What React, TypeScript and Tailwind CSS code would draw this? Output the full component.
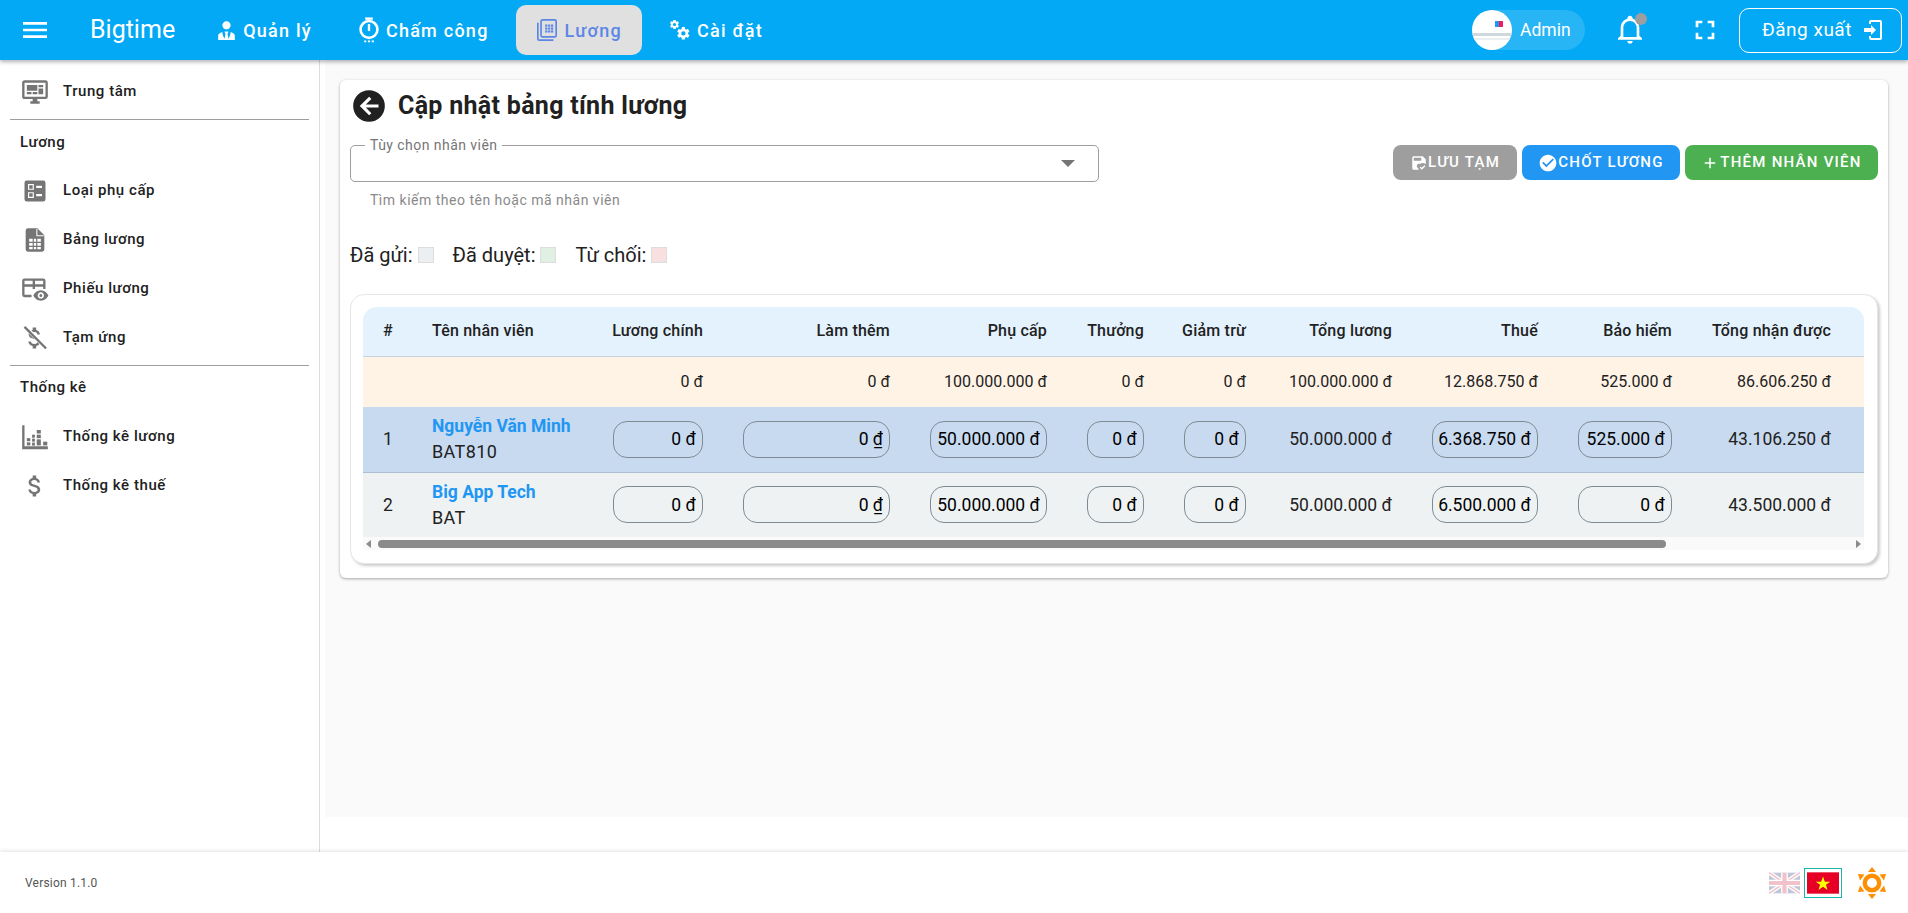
import type { ReactNode } from "react"

const ROBOTO = "font-['Roboto',sans-serif]"

const paths = {
  menu: "M3,6H21V8H3V6M3,11H21V13H3V11M3,16H21V18H3V16Z",
  tie: "M12 3C14.21 3 16 4.79 16 7S14.21 11 12 11 8 9.21 8 7 9.79 3 12 3M16 13.54C16 14.6 15.72 17.07 13.81 19.83L13 15L13.94 13.12C13.32 13.05 12.67 13 12 13S10.68 13.05 10.06 13.12L11 15L10.19 19.83C8.28 17.07 8 14.6 8 13.54C5.61 14.24 4 15.5 4 17V21H20V17C20 15.5 18.4 14.24 16 13.54Z",
  login: "M10,17V14H3V10H10V7L15,12L10,17M10,2H19A2,2 0 0,1 21,4V20A2,2 0 0,1 19,22H10A2,2 0 0,1 8,20V18H10V20H19V4H10V6H8V4A2,2 0 0,1 10,2Z",
  bell: "M10 21H14C14 22.1 13.1 23 12 23S10 22.1 10 21M21 19V20H3V19L5 17V11C5 7.9 7 5.2 10 4.3V4C10 2.9 10.9 2 12 2S14 2.9 14 4V4.3C17 5.2 19 7.9 19 11V17L21 19M17 11C17 8.2 14.8 6 12 6S7 8.2 7 11V18H17V11Z",
  fullscreen: "M5,5H10V7H7V10H5V5M14,5H19V10H17V7H14V5M17,14H19V19H14V17H17V14M10,17V19H5V14H7V17H10Z",
  back: "M2,12A10,10 0 0,1 12,2A10,10 0 0,1 22,12A10,10 0 0,1 12,22A10,10 0 0,1 2,12M18,11H10L13.5,7.5L12.08,6.08L6.16,12L12.08,17.92L13.5,16.5L10,13H18V11Z",
  check: "M12 2C6.5 2 2 6.5 2 12S6.5 22 12 22 22 17.5 22 12 17.5 2 12 2M10 17L5 12L6.41 10.59L10 14.17L17.59 6.58L19 8L10 17Z",
  plus: "M19,13H13V19H11V13H5V11H11V5H13V11H19V13Z",
  save: "M17 3H5C3.89 3 3 3.9 3 5V19C3 20.1 3.89 21 5 21H11.81C11.42 20.34 11.17 19.6 11.07 18.84C9.5 18.31 8.66 16.6 9.2 15.03C9.61 13.83 10.73 13 12 13C12.44 13 12.88 13.1 13.28 13.29C15.57 11.5 18.83 11.59 21 13.54V7L17 3M15 9H5V5H15V9M15.75 21L13 18L14.16 16.84L15.75 18.43L19.34 14.84L20.5 16.25L15.75 21",
  monitor: "M21,16V4H3V16H21M21,2A2,2 0 0,1 23,4V16A2,2 0 0,1 21,18H14V20H16V22H8V20H10V18H3C1.89,18 1,17.1 1,16V4C1,2.89 1.9,2 3,2H21M5,6H14V11H5V6M15,6H19V8H15V6M19,9V14H15V9H19M5,12H9V14H5V12M10,12H14V14H10V12Z",
  ballot: "M13,9.5H18V7.5H13V9.5M13,16.5H18V14.5H13V16.5M19,21H5A2,2 0 0,1 3,19V5A2,2 0 0,1 5,3H19A2,2 0 0,1 21,5V19A2,2 0 0,1 19,21M6,11H11V6H6V11M7,7H10V10H7V7M6,18H11V13H6V18M7,14H10V17H7V14Z",
  fileTable: "M6 2A2 2 0 0 0 4 4V20A2 2 0 0 0 6 22H18A2 2 0 0 0 20 20V8L14 2H6M7 11H10V13.5H7V11M11 11H13V13.5H11V11M14 11H17V13.5H14V11M7 14.5H10V17H7V14.5M11 14.5H13V17H11V14.5M14 14.5H17V17H14V14.5M7 18H10V20H7V18M11 18H13V20H11V18M14 18H17V20H14V18Z",
  dollar: "M11.8 10.9c-2.27-.59-3-1.2-3-2.15 0-1.09 1.01-1.85 2.7-1.85 1.78 0 2.44.85 2.5 2.1h2.21c-.07-1.72-1.12-3.3-3.21-3.81V3h-3v2.16c-1.94.42-3.5 1.68-3.5 3.61 0 2.31 1.91 3.46 4.7 4.13 2.5.6 3 1.48 3 2.41 0 .69-.49 1.79-2.7 1.79-2.06 0-2.87-.92-2.98-2.1h-2.2c.12 2.19 1.76 3.42 3.68 3.83V21h3v-2.15c1.95-.37 3.5-1.5 3.5-3.55 0-2.84-2.43-3.81-4.7-4.4z",
  cog: "M12,15.5A3.5,3.5 0 0,1 8.5,12A3.5,3.5 0 0,1 12,8.5A3.5,3.5 0 0,1 15.5,12A3.5,3.5 0 0,1 12,15.5M19.43,12.97C19.47,12.65 19.5,12.33 19.5,12C19.5,11.67 19.47,11.34 19.43,11L21.54,9.37C21.73,9.22 21.78,8.95 21.66,8.73L19.66,5.27C19.54,5.05 19.27,4.96 19.05,5.05L16.56,6.05C16.04,5.66 15.5,5.32 14.87,5.07L14.5,2.42C14.46,2.18 14.25,2 14,2H10C9.75,2 9.54,2.18 9.5,2.42L9.13,5.07C8.5,5.32 7.96,5.66 7.44,6.05L4.95,5.05C4.73,4.96 4.46,5.05 4.34,5.27L2.34,8.73C2.21,8.95 2.27,9.22 2.46,9.37L4.57,11C4.53,11.34 4.5,11.67 4.5,12C4.5,12.33 4.53,12.65 4.57,12.97L2.46,14.63C2.27,14.78 2.21,15.05 2.34,15.27L4.34,18.73C4.46,18.95 4.73,19.03 4.95,18.95L7.44,17.94C7.96,18.34 8.5,18.68 9.13,18.93L9.5,21.58C9.54,21.82 9.75,22 10,22H14C14.25,22 14.46,21.82 14.5,21.58L14.87,18.93C15.5,18.67 16.04,18.34 16.56,17.94L19.05,18.95C19.27,19.03 19.54,18.95 19.66,18.73L21.66,15.27C21.78,15.05 21.73,14.78 21.54,14.63L19.43,12.97Z",
}

function Icon({ d, className }: { d: string; className?: string }) {
  return (
    <svg viewBox="0 0 24 24" fill="currentColor" fillRule="evenodd" className={className}>
      <path d={d} />
    </svg>
  )
}

function TimerIcon({ className }: { className?: string }) {
  return (
    <svg viewBox="0 0 24 24" fill="none" stroke="currentColor" className={className}>
      <path d="M8.5 1.5H15.5" strokeWidth="2.2" />
      <circle cx="12" cy="11.5" r="7.8" strokeWidth="2.4" />
      <path d="M12 6.5V13" strokeWidth="2.2" />
      <path d="M7.5 22.5H9.5M11 22.5H13M14.5 22.5H16.5" strokeWidth="1.8" />
    </svg>
  )
}

function PayrollIcon({ className }: { className?: string }) {
  return (
    <svg viewBox="0 0 24 24" fill="none" stroke="currentColor" className={className}>
      <path d="M2 4V21.5A1.5 1.5 0 0 0 3.5 23H19" strokeWidth="1.8" />
      <rect x="5.5" y="1" width="16.5" height="18.5" rx="1.5" strokeWidth="1.8" />
      <g fill="currentColor" stroke="none">
        <rect x="10" y="6" width="2.4" height="2.4" />
        <rect x="13.2" y="6" width="2.4" height="2.4" />
        <rect x="16.4" y="6" width="2.4" height="2.4" />
        <rect x="10" y="9.2" width="2.4" height="2.4" />
        <rect x="13.2" y="9.2" width="2.4" height="2.4" />
        <rect x="16.4" y="9.2" width="2.4" height="2.4" />
        <rect x="10" y="12.4" width="2.4" height="2.4" />
        <rect x="13.2" y="12.4" width="2.4" height="2.4" />
        <rect x="16.4" y="12.4" width="2.4" height="2.4" />
      </g>
    </svg>
  )
}

function CogsIcon({ className }: { className?: string }) {
  return (
    <svg viewBox="0 0 24 24" fill="currentColor" fillRule="evenodd" className={className}>
      <path d={paths.cog} transform="translate(0 0) scale(0.5)" />
      <path d={paths.cog} transform="translate(7.5 7.5) scale(0.68)" />
    </svg>
  )
}

function FileTableIcon({ className }: { className?: string }) {
  return (
    <svg viewBox="0 0 24 24" className={className}>
      <path fill="currentColor" fillRule="evenodd" d={paths.fileTable} />
      <path d="M13.6 2.5V8.4H19.5" fill="none" stroke="#ffffff" strokeWidth="0.9" />
    </svg>
  )
}

function TableEyeIcon({ className }: { className?: string }) {
  return (
    <svg viewBox="0 0 24 24" className={className}>
      <path
        fill="currentColor"
        fillRule="evenodd"
        d="M3 3H19A2 2 0 0 1 21 5V12H19V10H12V12H10V10H3V17H9V19H3A2 2 0 0 1 1 17V5A2 2 0 0 1 3 3M3 5V8H10V5H3M12 5V8H19V5H12Z"
      />
      <path
        fill="currentColor"
        fillRule="evenodd"
        d="M17 13C20 13 22.3 15 23.5 17.5C22.3 20 20 22 17 22C14 22 11.7 20 10.5 17.5C11.7 15 14 13 17 13M17 14.8C15.5 14.8 14.3 16 14.3 17.5C14.3 19 15.5 20.2 17 20.2C18.5 20.2 19.7 19 19.7 17.5C19.7 16 18.5 14.8 17 14.8M17 16.2A1.3 1.3 0 1 1 17 18.8A1.3 1.3 0 1 1 17 16.2Z"
      />
    </svg>
  )
}

function DollarOffIcon({ className }: { className?: string }) {
  return (
    <svg viewBox="0 0 24 24" className={className}>
      <path fill="currentColor" d={paths.dollar} />
      <path d="M2.5 1.5L22.5 21.5" stroke="#ffffff" strokeWidth="3.5" />
      <path d="M3 2.5L21.5 21" stroke="currentColor" strokeWidth="2" />
    </svg>
  )
}

function ChartIcon({ className }: { className?: string }) {
  return (
    <svg viewBox="0 0 24 24" fill="currentColor" className={className}>
      <path d="M1 2H3V20H23V22.5H1Z" />
      <rect x="5" y="13" width="3" height="2.6" />
      <rect x="5" y="16.6" width="3" height="2.6" />
      <rect x="9.5" y="10" width="2.4" height="2.6" />
      <rect x="9.5" y="13.4" width="2.4" height="2.6" />
      <rect x="9.5" y="16.8" width="2.4" height="2.6" />
      <rect x="13.5" y="6" width="3.5" height="3" />
      <rect x="13.5" y="10" width="3.5" height="3" />
      <rect x="13.5" y="14" width="3.5" height="5.2" />
      <rect x="19" y="16" width="3.5" height="3.2" />
    </svg>
  )
}

function NavItem({ icon, label, active }: { icon: ReactNode; label: string; active?: boolean }) {
  return (
    <div
      className={`flex h-[50px] items-center rounded-[10px] px-[20px] text-[18px] font-medium tracking-[1.25px] ${
        active ? "bg-[#e0e0e0] text-[#5b86e5]" : "text-white"
      }`}
    >
      {icon}
      {label}
    </div>
  )
}

function Header() {
  return (
    <header className="relative z-20 flex h-[60px] shrink-0 items-center bg-[#03a9f4] text-white shadow-[0_2px_4px_rgba(0,0,0,0.3)]">
      <Icon d={paths.menu} className="ml-[19px] h-[32px] w-[32px]" />
      <span className="ml-[39px] text-[25px] whitespace-nowrap">Bigtime</span>
      <nav className="ml-[22px] flex items-center gap-[7px]">
        <NavItem icon={<Icon d={paths.tie} className="mr-[4px] -ml-[3px] h-[25px] w-[25px]" />} label="Quản lý" />
        <NavItem icon={<TimerIcon className="mr-[4px] -ml-[3px] h-[28px] w-[26px]" />} label="Chấm công" />
        <NavItem active icon={<PayrollIcon className="mr-[7px] h-[24px] w-[22px]" />} label="Lương" />
        <NavItem icon={<CogsIcon className="mr-[6px] h-[24px] w-[22px]" />} label="Cài đặt" />
      </nav>
      <div className="ml-auto flex items-center pr-[6px]">
        <div className="flex h-[40px] w-[113px] items-center rounded-full bg-white/15">
          <div className="flex h-[40px] w-[40px] flex-col items-center justify-center overflow-hidden rounded-full bg-white">
            <div className="ml-[14px] flex h-[6px] w-[8px]">
              <span className="w-1/2 bg-[#2196f3]" />
              <span className="w-1/2 bg-[#e91e63]" />
            </div>
            <div className="mt-[6px] h-[3px] w-full bg-[#cfd8dc]" />
            <div className="mt-[2px] h-[2px] w-full bg-[#eceff1]" />
          </div>
          <span className="ml-[8px] text-[17.5px]">Admin</span>
        </div>
        <div className="relative ml-[29px] -mt-[2px] h-[32px] w-[32px]">
          <Icon d={paths.bell} className="h-[32px] w-[32px]" />
          <span className="absolute top-0 left-[21px] h-[12px] w-[12px] rounded-full bg-[#9e9e9e]" />
        </div>
        <Icon d={paths.fullscreen} className="ml-[43px] h-[32px] w-[32px]" />
        <button className="ml-[18px] flex h-[45px] w-[163px] items-center rounded-[10px] border border-white pl-[22px] text-[19px] tracking-[0.5px]">
          Đăng xuất
          <Icon d={paths.login} className="ml-[9px] h-[24px] w-[24px]" />
        </button>
      </div>
    </header>
  )
}

function SideItem({ icon, label }: { icon: ReactNode; label: string }) {
  return (
    <div className="flex h-[49px] items-center pl-[21px] text-[15px] font-medium tracking-[0.55px] text-[#212121]">
      <span className="flex w-[28px] justify-center text-[#757575]">{icon}</span>
      <span className="ml-[14px]">{label}</span>
    </div>
  )
}

function SideLabel({ label }: { label: string }) {
  return <div className="flex h-[44px] items-center pl-[20px] text-[15px] font-medium tracking-[0.55px] text-[#212121]">{label}</div>
}

function Sidebar() {
  return (
    <aside className="w-[320px] shrink-0 border-r border-[#dcdcdc] bg-white pt-[7px]">
      <SideItem icon={<Icon d={paths.monitor} className="h-[28px] w-[28px]" />} label="Trung tâm" />
      <div className="mx-[10px] mt-[3px] border-t border-[#9e9e9e]" />
      <SideLabel label="Lương" />
      <div className="h-[2px]" />
      <SideItem icon={<Icon d={paths.ballot} className="h-[28px] w-[28px]" />} label="Loại phụ cấp" />
      <SideItem icon={<FileTableIcon className="h-[30px] w-[30px]" />} label="Bảng lương" />
      <SideItem icon={<TableEyeIcon className="h-[28px] w-[28px]" />} label="Phiếu lương" />
      <SideItem icon={<DollarOffIcon className="h-[28px] w-[28px]" />} label="Tạm ứng" />
      <div className="mx-[10px] mt-[3px] border-t border-[#9e9e9e]" />
      <div className="-mt-[1px]">
        <SideLabel label="Thống kê" />
      </div>
      <div className="h-[3px]" />
      <SideItem icon={<ChartIcon className="h-[28px] w-[28px]" />} label="Thống kê lương" />
      <SideItem icon={<Icon d={paths.dollar} className="h-[28px] w-[28px]" />} label="Thống kê thuế" />
    </aside>
  )
}

function ActionButton({ bg, icon, label }: { bg: string; icon: ReactNode; label: string }) {
  return (
    <button className={`flex h-[35px] items-center justify-center rounded-[8px] text-[15px] font-medium tracking-[1.25px] text-white ${bg}`}>
      {icon}
      {label}
    </button>
  )
}

function Legend({ label, box }: { label: string; box: string }) {
  return (
    <div className="flex items-center">
      <span>{label}</span>
      <span className={`ml-[5px] h-[16px] w-[16px] border border-[#dddddd] ${box}`} />
    </div>
  )
}

const colWidths = ["w-[50px]", "w-[180px]", "w-[130px]", "w-[187px]", "w-[157px]", "w-[97px]", "w-[102px]", "w-[146px]", "w-[146px]", "w-[134px]", "w-[172px]"]

const headers = ["Lương chính", "Làm thêm", "Phụ cấp", "Thưởng", "Giảm trừ", "Tổng lương", "Thuế", "Bảo hiểm", "Tổng nhận được"]

const totals = ["0 đ", "0 đ", "100.000.000 đ", "0 đ", "0 đ", "100.000.000 đ", "12.868.750 đ", "525.000 đ", "86.606.250 đ"]

function MoneyInput({ value }: { value: string }) {
  return (
    <input
      readOnly
      value={value}
      className="block h-[37px] w-full rounded-[14px] border border-[#7f8b94] bg-transparent pr-[6px] pl-[4px] text-right text-[17.5px] text-black outline-none"
    />
  )
}

function EmployeeRow({ no, name, code, bg, values }: { no: number; name: string; code: string; bg: string; values: string[] }) {
  return (
    <tr className={`h-[65px] ${bg}`}>
      <td className="pl-[20px] text-[17.5px] text-[#212121]">{no}</td>
      <td className="pr-[20px] pl-[19px]">
        <div className="text-[17.5px] leading-[26px] font-bold whitespace-nowrap text-[#2196f3]">{name}</div>
        <div className="text-[18px] leading-[26px] tracking-[0.4px] text-[#212121]">{code}</div>
      </td>
      {values.map((v, i) =>
        i === 5 || i === 8 ? (
          <td key={i} className={`text-right text-[17.5px] text-[#212121] ${i === 8 ? "pr-[33px]" : "pr-[20px]"}`}>
            {v}
          </td>
        ) : (
          <td key={i} className="px-[20px]">
            <MoneyInput value={v} />
          </td>
        ),
      )}
    </tr>
  )
}

function PayrollTable() {
  return (
    <div className="mt-[27px] rounded-[14px] border border-[#e6e6e6] bg-white pt-[12px] pr-[13px] pb-[13px] pl-[12px] shadow-[2px_2px_3px_rgba(0,0,0,0.2)]">
      <table className="w-[1501px] table-fixed border-collapse overflow-hidden rounded-t-[14px] text-[16px] text-[#212121]">
        <colgroup>
          {colWidths.map((w) => (
            <col key={w} className={w} />
          ))}
        </colgroup>
        <thead>
          <tr className="h-[49px] border-b border-[#c8d2de] bg-[#e3f2fd] font-medium">
            <th className="pl-[20px] text-left font-medium">#</th>
            <th className="pr-[20px] pl-[19px] text-left font-medium tracking-[0.2px]">Tên nhân viên</th>
            {headers.map((h, i) => (
              <th key={h} className={`text-right font-medium tracking-[0.2px] whitespace-nowrap ${i === 8 ? "pr-[33px]" : "pr-[20px]"}`}>
                {h}
              </th>
            ))}
          </tr>
        </thead>
        <tbody>
          <tr className="h-[51px] bg-[#fff3e5]">
            <td />
            <td />
            {totals.map((v, i) => (
              <td key={i} className={`text-right ${i === 8 ? "pr-[33px]" : "pr-[20px]"}`}>
                {v}
              </td>
            ))}
          </tr>
          <EmployeeRow
            no={1}
            name="Nguyễn Văn Minh"
            code="BAT810"
            bg="border-b border-[#aebfd4] bg-[#c8daf0]"
            values={["0 đ", "0 ₫", "50.000.000 đ", "0 đ", "0 đ", "50.000.000 đ", "6.368.750 đ", "525.000 đ", "43.106.250 đ"]}
          />
          <EmployeeRow
            no={2}
            name="Big App Tech"
            code="BAT"
            bg="bg-[#eef2f3]"
            values={["0 đ", "0 ₫", "50.000.000 đ", "0 đ", "0 đ", "50.000.000 đ", "6.500.000 đ", "0 đ", "43.500.000 đ"]}
          />
        </tbody>
      </table>
      <div className="flex h-[13px] w-[1501px] items-center bg-[#fafafa]">
        <span className="ml-[3px] h-0 w-0 border-y-[4px] border-r-[5px] border-y-transparent border-r-[#8a8a8a]" />
        <span className="ml-[7px] h-[8px] w-[1288px] rounded-full bg-[#8a8a8a]" />
        <span className="mr-[3px] ml-auto h-0 w-0 border-y-[4px] border-l-[5px] border-y-transparent border-l-[#8a8a8a]" />
      </div>
    </div>
  )
}

function Content() {
  return (
    <main className="flex-1 pl-[5px]">
      <div className="h-[757px] bg-[#fafafa] pt-[20px] pr-[22px] pl-[15px]">
        <section className="h-[498px] rounded-[6px] bg-white px-[10px] pt-[8px] shadow-[0_1px_3px_rgba(0,0,0,0.35)]">
          <div className="flex h-[36px] items-center pl-[3px]">
            <Icon d={paths.back} className="-mx-[3px] h-[38px] w-[38px] text-[#212121]" />
            <h1 className="ml-[13px] text-[25px] font-bold tracking-[0.3px] text-[#212121]">Cập nhật bảng tính lương</h1>
          </div>
          <div className="mt-[21px] flex items-start justify-between">
            <div className="w-[749px]">
              <div className="relative flex h-[37px] items-center justify-end rounded-[5px] border border-[#9e9e9e] pr-[23px]">
                <span className="absolute top-[-9px] left-[14px] bg-white px-[5px] text-[14px] leading-[16px] tracking-[0.45px] text-[#757575]">
                  Tùy chọn nhân viên
                </span>
                <span className="h-0 w-0 border-x-[7px] border-t-[7px] border-x-transparent border-t-[#757575]" />
              </div>
              <div className="mt-[9px] pl-[20px] text-[14px] leading-[18px] tracking-[0.5px] text-[#8a8a8a]">
                Tìm kiếm theo tên hoặc mã nhân viên
              </div>
            </div>
            <div className="flex gap-[5px]">
              <ActionButton bg="w-[124px] bg-[#9e9e9e]" icon={<Icon d={paths.save} className="h-[18px] w-[18px]" />} label="LƯU TẠM" />
              <ActionButton bg="w-[158px] bg-[#2196f3]" icon={<Icon d={paths.check} className="h-[20px] w-[20px]" />} label="CHỐT LƯƠNG" />
              <ActionButton bg="w-[193px] bg-[#4caf50]" icon={<Icon d={paths.plus} className="mr-[1px] h-[18px] w-[18px]" />} label="THÊM NHÂN VIÊN" />
            </div>
          </div>
          <div className="mt-[34px] flex h-[24px] items-center gap-[19px] text-[20px] text-[#212121]">
            <Legend label="Đã gửi:" box="bg-[#eceff1]" />
            <Legend label="Đã duyệt:" box="bg-[#e0f0e3]" />
            <Legend label="Từ chối:" box="bg-[#f9e0e0]" />
          </div>
          <PayrollTable />
        </section>
      </div>
    </main>
  )
}

function UkFlag() {
  return (
    <svg viewBox="0 0 60 40" className="h-[22px] w-[31px] opacity-25">
      <rect width="60" height="40" fill="#012169" />
      <path d="M0 0L60 40M60 0L0 40" stroke="#ffffff" strokeWidth="8" />
      <path d="M0 0L60 40M60 0L0 40" stroke="#c8102e" strokeWidth="3" />
      <path d="M30 0V40M0 20H60" stroke="#ffffff" strokeWidth="13" />
      <path d="M30 0V40M0 20H60" stroke="#c8102e" strokeWidth="8" />
    </svg>
  )
}

function VnFlag() {
  return (
    <svg viewBox="0 0 60 40" className="h-[22px] w-[32px]">
      <rect width="60" height="40" fill="#e60026" />
      <path fill="#ffff00" d="M30 8L33.5 17.5H43.5L35.5 23.5L38.5 33L30 27L21.5 33L24.5 23.5L16.5 17.5H26.5Z" />
    </svg>
  )
}

function SunIcon() {
  return (
    <svg viewBox="0 0 32 32" className="h-[32px] w-[32px]" fill="#ff8f00">
      <circle cx="16" cy="16" r="7.2" fill="none" stroke="#ff8f00" strokeWidth="4.4" />
      <path d="M16 0L20 5H12ZM16 32L12 27H20ZM2 7L8.5 7.5L4 13.5ZM30 7L28 13.5L23.5 7.5ZM2 25L4 18.5L8.5 24.5ZM30 25L23.5 24.5L28 18.5Z" />
    </svg>
  )
}

function Footer() {
  return (
    <footer className="relative z-10 flex h-[61px] shrink-0 items-center bg-white pr-[20px] pl-[25px] shadow-[0_-1px_4px_rgba(0,0,0,0.12)]">
      <span className="text-[12px] tracking-[0.2px] text-[#555555]">Version 1.1.0</span>
      <div className="ml-auto flex items-center">
        <UkFlag />
        <div className="ml-[4px] flex h-[30px] w-[38px] items-center justify-center border border-[#1ab6a8]">
          <VnFlag />
        </div>
        <div className="ml-[14px]">
          <SunIcon />
        </div>
      </div>
    </footer>
  )
}

export default function App() {
  return (
    <div className={`flex h-screen flex-col overflow-hidden bg-white ${ROBOTO}`}>
      <Header />
      <div className="flex min-h-0 flex-1">
        <Sidebar />
        <Content />
      </div>
      <Footer />
    </div>
  )
}
